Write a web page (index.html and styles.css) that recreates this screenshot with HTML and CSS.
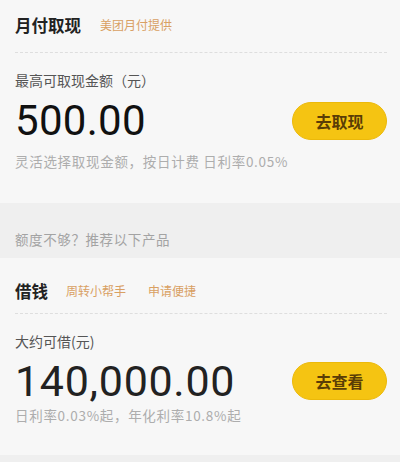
FILE: index.html
```html
<!DOCTYPE html>
<html lang="zh-CN">
<head>
<meta charset="utf-8">
<link rel="stylesheet" href="styles.css">
</head>
<body>
<section class="card card-top">
  <div class="head head-top">
    <span class="title">月付取现</span>
    <span class="tag">美团月付提供</span>
  </div>
  <div class="label">最高可取现金额（元）</div>
  <div class="row">
    <span class="amount amount-dark">500.00</span>
    <button class="btn">去取现</button>
  </div>
  <div class="sub sub-top">灵活选择取现金额，按日计费 日利率0.05%</div>
</section>
<div class="band">额度不够？推荐以下产品</div>
<section class="card card-bottom">
  <div class="head head-bottom">
    <span class="title">借钱</span>
    <span class="tag tag-first">周转小帮手</span>
    <span class="tag">申请便捷</span>
  </div>
  <div class="label">大约可借(元)</div>
  <div class="row row-bottom">
    <span class="amount amount-wide">140,000.00</span>
    <button class="btn">去查看</button>
  </div>
  <div class="sub sub-bottom">日利率0.03%起，年化利率10.8%起</div>
</section>
<div class="foot"></div>
</body>
</html>
```

FILE: styles.css
```css
* { box-sizing: border-box; }
html, body {
  margin: 0;
  padding: 0;
  background: #efefef;
  font-family: "Noto Sans CJK SC", "Noto Sans", sans-serif;
}
body { width: 400px; height: 462px; overflow: hidden; }

.card {
  background: #f7f7f7;
  padding: 0 13px 0 15px;
}
.card-top { padding-bottom: 33px; }
.card-bottom { padding-bottom: 31px; }

.head {
  display: flex;
  align-items: center;
  border-bottom: 1px dashed #dedede;
}
.head-top { height: 53px; padding-bottom: 2px; }
.head-bottom { height: 56px; padding-top: 22px; padding-bottom: 11px; }

.title {
  font-size: 16.5px;
  font-weight: 700;
  color: #222;
  line-height: 22px;
}
.tag {
  font-size: 12px;
  color: #d9a063;
  margin-left: 18px;
  line-height: 16px;
}
.head-top .tag { margin-left: 19px; }
.tag-first + .tag { margin-left: 22px; }

.label {
  margin-top: 17px;
  font-size: 14px;
  line-height: 20px;
  color: #555;
}

.row {
  margin-top: 7px;
  height: 48px;
  display: flex;
  align-items: center;
  justify-content: space-between;
}
.row-bottom { margin-top: 6px; }

.amount {
  font-family: Roboto, "Noto Sans", sans-serif;
  font-size: 42px;
  line-height: 48px;
  color: #111;
  letter-spacing: 0.3px;
}
.amount-wide { color: #222; font-size: 43px; letter-spacing: 0.7px; }

.btn {
  width: 95px;
  height: 38px;
  border-radius: 19px;
  border: 1px solid #ecb90a;
  background: #f5c412;
  color: #5a3d06;
  font-family: "Noto Sans CJK SC", sans-serif;
  font-size: 16px;
  font-weight: 700;
  padding: 0;
}

.sub {
  font-size: 13.5px;
  line-height: 18px;
  color: #adadad;
  letter-spacing: 0.7px;
}
.sub-top { margin-top: 7px; }
.sub-bottom { margin-top: 1px; }

.band {
  height: 55px;
  padding: 26px 0 0 15px;
  font-size: 13.5px;
  line-height: 20px;
  color: #a3a3a3;
  letter-spacing: 0.6px;
}
.foot { height: 10px; }
```
